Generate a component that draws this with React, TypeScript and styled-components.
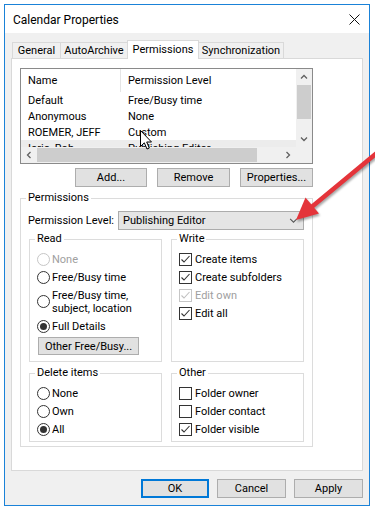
import React from "react";
import styled, { createGlobalStyle, css } from "styled-components";

const GlobalStyle = createGlobalStyle`
  html, body {
    margin: 0;
    padding: 0;
    background: #ffffff;
  }
  body {
    font-family: Roboto, "Noto Sans", sans-serif;
    font-size: 11px;
    color: #000;
  }
  * {
    box-sizing: border-box;
  }
`;

const Page = styled.div`
  position: relative;
  width: 375px;
  height: 512px;
  padding: 4px;
`;

const Window = styled.div`
  width: 366px;
  height: 502px;
  border: 1px solid #1a82d8;
  background: #f0f0f0;
  display: flex;
  flex-direction: column;
`;

const TitleBar = styled.div`
  height: 28px;
  background: #ffffff;
  display: flex;
  align-items: center;
  justify-content: space-between;
  padding: 1px 9px 0 8px;
`;

const TitleText = styled.span`
  font-size: 12px;
  color: #000;
`;

const Body = styled.div`
  flex: 1;
  display: flex;
  flex-direction: column;
  padding: 7px 6px 0 6px;
`;

const TabStrip = styled.div`
  display: flex;
  align-items: flex-end;
  height: 18px;
  padding-left: 2px;
`;

const Tab = styled.div<{ $active?: boolean; $width: number }>`
  width: ${p => p.$width}px;
  height: 16px;
  border: 1px solid #d9d9d9;
  border-bottom: none;
  margin-left: -1px;
  background: #f0f0f0;
  display: flex;
  align-items: center;
  justify-content: center;
  white-space: nowrap;
  ${p => p.$active && css`
    position: relative;
    z-index: 1;
    height: 19px;
    margin-bottom: -1px;
    background: #ffffff;
    padding-bottom: 2px;
  `}
`;

const Panel = styled.div`
  width: 352px;
  height: 413px;
  border: 1px solid #d9d9d9;
  background: #ffffff;
  padding: 9px 8px;
  display: flex;
  flex-direction: column;
`;

const ListBox = styled.div`
  width: 293px;
  height: 96px;
  border: 1px solid #8a8a8a;
  display: grid;
  grid-template-columns: 1fr 16px;
  grid-template-rows: 1fr 16px;
`;

const ListContent = styled.div`
  overflow: hidden;
  display: flex;
  flex-direction: column;
`;

const ListHeader = styled.div`
  height: 23px;
  flex-shrink: 0;
  display: grid;
  grid-template-columns: 99px 1fr;
  align-items: stretch;
`;

const HeaderCell = styled.div<{ $sep?: boolean }>`
  display: flex;
  align-items: center;
  padding-left: 7px;
  ${p => p.$sep && css`
    border-left: 1px solid #e5e5e5;
  `}
`;

const ListRow = styled.div<{ $selected?: boolean }>`
  height: 16px;
  flex-shrink: 0;
  display: grid;
  grid-template-columns: 99px 1fr;
  align-items: center;
  background: ${p => (p.$selected ? "#ececec" : "transparent")};
`;

const Cell = styled.div<{ $second?: boolean }>`
  padding-left: ${p => (p.$second ? 8 : 7)}px;
  white-space: nowrap;
`;

const VScroll = styled.div`
  background: #f0f0f0;
  display: flex;
  flex-direction: column;
`;

const HScroll = styled.div`
  background: #f0f0f0;
  display: flex;
`;

const Corner = styled.div`
  background: #f0f0f0;
`;

const ScrollArrow = styled.div`
  width: 16px;
  height: 16px;
  flex-shrink: 0;
  display: flex;
  align-items: center;
  justify-content: center;
`;

const VThumb = styled.div`
  height: 34px;
  margin: 0 1px;
  background: #cdcdcd;
`;

const HThumb = styled.div`
  width: 220px;
  margin: 1px 0;
  background: #cdcdcd;
`;

const Spacer = styled.div`
  flex: 1;
`;

const ChevronSvg = styled.svg<{ $rot: number }>`
  transform: rotate(${p => p.$rot}deg);
`;

const Chevron = ({ dir, color = "#606060", size = 8, weight = 1.3 }: { dir: "up" | "down" | "left" | "right"; color?: string; size?: number; weight?: number }) => {
  const rot = { down: 0, up: 180, left: 90, right: -90 }[dir];
  return (
    <ChevronSvg $rot={rot} width={size} height={size} viewBox="0 0 8 8">
      <polyline points="1,2.5 4,5.5 7,2.5" fill="none" stroke={color} strokeWidth={weight} />
    </ChevronSvg>
  );
};

const ActionRow = styled.div`
  width: 293px;
  margin-top: 4px;
  display: flex;
  justify-content: flex-end;
  gap: 10px;
`;

const PushButton = styled.div<{ $width: number; $default?: boolean }>`
  width: ${p => p.$width}px;
  height: 19px;
  background: #e1e1e1;
  border: 1px solid ${p => (p.$default ? "#0078d7" : "#adadad")};
  ${p => p.$default && css`
    box-shadow: inset 0 0 0 1px #0078d7;
  `}
  display: flex;
  align-items: center;
  justify-content: center;
  white-space: nowrap;
`;

const GroupBox = styled.fieldset<{ $width?: number; $gap?: number }>`
  margin: ${p => p.$gap ?? 0}px 0 0 0;
  padding: 0;
  min-width: 0;
  border: 1px solid #dcdcdc;
  ${p => p.$width && css`
    width: ${p.$width}px;
  `}
`;

const GroupLegend = styled.legend`
  margin-left: 5px;
  padding: 0 2px;
  line-height: 16px;
  font-size: 11px;
`;

const GroupBody = styled.div<{ $pad: string }>`
  padding: ${p => p.$pad};
  display: flex;
  flex-direction: column;
`;

const LevelRow = styled.div`
  height: 19px;
  display: flex;
  align-items: center;
  justify-content: space-between;
  margin-left: -1px;
`;

const Select = styled.div`
  width: 186px;
  height: 19px;
  background: #e5e5e5;
  border: 1px solid #acacac;
  display: flex;
  align-items: center;
  justify-content: space-between;
  padding: 0 5px 0 4px;
`;

const GroupGrid = styled.div`
  margin-top: 1px;
  display: grid;
  grid-template-columns: 133px 133px;
  column-gap: 9px;
  row-gap: 3px;
`;

const OptionRow = styled.div<{ $disabled?: boolean }>`
  display: flex;
  align-items: flex-start;
  padding: 2.5px 0;
  line-height: 13px;
  color: ${p => (p.$disabled ? "#a0a0a0" : "#000")};
`;

const RadioMark = styled.span<{ $checked?: boolean; $disabled?: boolean }>`
  width: 13px;
  height: 13px;
  flex-shrink: 0;
  border-radius: 50%;
  border: 1px solid ${p => (p.$disabled ? "#c6c6c6" : "#333333")};
  background: #ffffff;
  margin-right: 2px;
  align-self: center;
  display: flex;
  align-items: center;
  justify-content: center;
  &::after {
    content: "";
    width: 7px;
    height: 7px;
    border-radius: 50%;
    background: #333333;
    display: ${p => (p.$checked ? "block" : "none")};
  }
`;

const CheckBox = styled.span<{ $disabled?: boolean }>`
  width: 13px;
  height: 13px;
  flex-shrink: 0;
  border: 1px solid ${p => (p.$disabled ? "#c6c6c6" : "#333333")};
  background: #ffffff;
  margin-right: 3px;
  display: flex;
  align-items: center;
  justify-content: center;
`;

const OptionLabel = styled.span`
  white-space: nowrap;
`;

const SmallButton = styled(PushButton)`
  height: 18px;
  margin-top: 2px;
  margin-left: 1px;
`;

const Footer = styled.div`
  display: flex;
  justify-content: flex-end;
  gap: 8px;
  margin-top: 8px;
`;

const ArrowOverlay = styled.svg`
  position: absolute;
  left: 280px;
  top: 145px;
  filter: drop-shadow(1px 2px 1px rgba(0, 0, 0, 0.35));
`;

const CursorOverlay = styled.svg`
  position: absolute;
  left: 140px;
  top: 130px;
`;

const Radio = ({ label, checked, disabled }: { label: React.ReactNode; checked?: boolean; disabled?: boolean }) => (
  <OptionRow $disabled={disabled}>
    <RadioMark $checked={checked} $disabled={disabled} />
    <OptionLabel>{label}</OptionLabel>
  </OptionRow>
);

const Check = ({ label, checked, disabled }: { label: string; checked?: boolean; disabled?: boolean }) => (
  <OptionRow $disabled={disabled}>
    <CheckBox $disabled={disabled}>
      {checked && (
        <svg width="11" height="11" viewBox="0 0 11 11">
          <polyline points="1.5,5.5 4,8 9.5,2" fill="none" stroke={disabled ? "#c0c0c0" : "#333"} strokeWidth="1.1" />
        </svg>
      )}
    </CheckBox>
    <OptionLabel>{label}</OptionLabel>
  </OptionRow>
);

const rows = [
  ["Default", "Free/Busy time"],
  ["Anonymous", "None"],
  ["ROEMER, JEFF", "Custom"],
  ["Iorio, Rob", "Publishing Editor"],
];

export default function App() {
  return (
    <Page>
      <GlobalStyle />
      <Window>
        <TitleBar>
          <TitleText>Calendar Properties</TitleText>
          <svg width="11" height="11" viewBox="0 0 11 11">
            <path d="M0.5 0.5 L10.5 10.5 M10.5 0.5 L0.5 10.5" stroke="#111" strokeWidth="1" />
          </svg>
        </TitleBar>
        <Body>
          <TabStrip>
            <Tab $width={49}>General</Tab>
            <Tab $width={68}>AutoArchive</Tab>
            <Tab $width={72} $active>Permissions</Tab>
            <Tab $width={86}>Synchronization</Tab>
          </TabStrip>
          <Panel>
            <ListBox>
              <ListContent>
                <ListHeader>
                  <HeaderCell>Name</HeaderCell>
                  <HeaderCell $sep>Permission Level</HeaderCell>
                </ListHeader>
                {rows.map(([name, level], i) => (
                  <ListRow key={name} $selected={i === 3}>
                    <Cell>{name}</Cell>
                    <Cell $second>{level}</Cell>
                  </ListRow>
                ))}
              </ListContent>
              <VScroll>
                <ScrollArrow><Chevron dir="up" /></ScrollArrow>
                <VThumb />
                <Spacer />
                <ScrollArrow><Chevron dir="down" /></ScrollArrow>
              </VScroll>
              <HScroll>
                <ScrollArrow><Chevron dir="left" /></ScrollArrow>
                <HThumb />
                <Spacer />
                <ScrollArrow><Chevron dir="right" /></ScrollArrow>
              </HScroll>
              <Corner />
            </ListBox>

            <ActionRow>
              <PushButton $width={72}>Add...</PushButton>
              <PushButton $width={73}>Remove</PushButton>
              <PushButton $width={73}>Properties...</PushButton>
            </ActionRow>

            <GroupBox $width={293} $gap={3}>
              <GroupLegend>Permissions</GroupLegend>
              <GroupBody $pad="5px 8px 4px 8px">
                <LevelRow>
                  <span>Permission Level:</span>
                  <Select>
                    <span>Publishing Editor</span>
                    <Chevron dir="down" color="#555" size={9} weight={0.9} />
                  </Select>
                </LevelRow>
                <GroupGrid>
                  <GroupBox>
                    <GroupLegend>Read</GroupLegend>
                    <GroupBody $pad="3px 4px 6px 7px">
                      <Radio label="None" disabled />
                      <Radio label="Free/Busy time" />
                      <Radio label={<>Free/Busy time,<br />subject, location</>} />
                      <Radio label="Full Details" checked />
                      <SmallButton $width={101}>Other Free/Busy...</SmallButton>
                    </GroupBody>
                  </GroupBox>
                  <GroupBox>
                    <GroupLegend>Write</GroupLegend>
                    <GroupBody $pad="3px 4px 6px 7px">
                      <Check label="Create items" checked />
                      <Check label="Create subfolders" checked />
                      <Check label="Edit own" checked disabled />
                      <Check label="Edit all" checked />
                    </GroupBody>
                  </GroupBox>
                  <GroupBox>
                    <GroupLegend>Delete items</GroupLegend>
                    <GroupBody $pad="3px 4px 3px 7px">
                      <Radio label="None" />
                      <Radio label="Own" />
                      <Radio label="All" checked />
                    </GroupBody>
                  </GroupBox>
                  <GroupBox>
                    <GroupLegend>Other</GroupLegend>
                    <GroupBody $pad="3px 4px 3px 7px">
                      <Check label="Folder owner" />
                      <Check label="Folder contact" />
                      <Check label="Folder visible" checked />
                    </GroupBody>
                  </GroupBox>
                </GroupGrid>
              </GroupBody>
            </GroupBox>
          </Panel>
          <Footer>
            <PushButton $width={68} $default>OK</PushButton>
            <PushButton $width={69}>Cancel</PushButton>
            <PushButton $width={69}>Apply</PushButton>
          </Footer>
        </Body>
      </Window>

      <ArrowOverlay width="100" height="85" viewBox="0 0 100 85">
        <line x1="98" y1="7" x2="31" y2="62.5" stroke="#e4343a" strokeWidth="4.5" strokeLinecap="round" />
        <polygon points="16,75 39,68.5 25.5,52.5" fill="#e4343a" />
      </ArrowOverlay>

      <CursorOverlay width="13" height="21" viewBox="0 0 13 21">
        <path d="M0.5 0.5 L0.5 16.5 L4.3 12.8 L7 19 L9.3 18 L6.7 12 L11.5 12 Z" fill="#fff" stroke="#000" strokeWidth="1" strokeLinejoin="round" />
      </CursorOverlay>
    </Page>
  );
}
